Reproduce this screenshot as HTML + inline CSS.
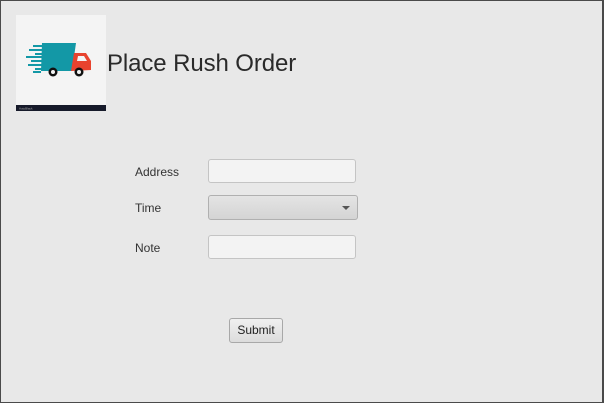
<!DOCTYPE html>
<html><head><meta charset="utf-8"><style>
html,body{margin:0;padding:0;}
body{width:604px;height:403px;position:relative;overflow:hidden;background:#e8e8e8;font-family:"Liberation Sans",sans-serif;}
.frame{position:absolute;left:0;top:0;width:601px;height:401px;border-left:1px solid #4a4a4a;border-top:1px solid #4a4a4a;border-right:2px solid #4a4a4a;border-bottom:1px solid #4a4a4a;}
.logo{position:absolute;left:16px;top:15px;width:90px;height:96px;background:#f4f4f4;}
.title{position:absolute;left:107px;top:50px;font-size:24px;color:#2a2a2a;letter-spacing:-0.1px;}
.lbl{position:absolute;left:135px;font-size:12px;color:#333;}
.inp{position:absolute;left:208px;width:148px;height:24px;border:1px solid #c4c4c4;border-radius:3px;background:#f3f3f3;box-sizing:border-box;}
.combo{position:absolute;left:208px;top:195px;width:150px;height:25px;border:1px solid #b0b0b0;border-radius:3px;background:linear-gradient(#e4e4e4,#d4d4d4);box-sizing:border-box;}
.combo:after{content:"";position:absolute;right:7px;top:10px;border-left:4px solid transparent;border-right:4px solid transparent;border-top:4px solid #555;}
.btn{position:absolute;left:229px;top:318px;width:54px;height:25px;border:1px solid #a8a8a8;border-radius:3px;background:linear-gradient(#f0f0f0,#dcdcdc);box-sizing:border-box;font-size:12px;color:#222;text-align:center;line-height:23px;}
</style></head><body>
<div class="frame"></div>
<div class="logo">
<svg width="90" height="96" viewBox="0 0 90 96">
<rect x="0" y="90" width="90" height="6" fill="#161a2a"/>
<text x="3" y="94.5" font-size="3" fill="#aaa" font-family="Liberation Sans">AutoBlack</text>
<g fill="#1398a6">
<polygon points="26,28 60,28 56,56 25,56"/>
<rect x="17" y="30" width="9" height="2"/><rect x="13" y="34" width="13" height="2"/>
<rect x="19" y="38" width="7" height="2"/><rect x="10" y="41" width="16" height="2"/>
<rect x="15" y="45" width="11" height="2"/><rect x="12" y="49" width="14" height="2"/>
<rect x="19" y="53" width="7" height="2"/><rect x="17" y="56" width="8" height="2"/>
</g>
<polygon points="58,38 70,38 75,46 75,55 55,56" fill="#e8432e"/>
<polygon points="62,41 68,41 71,46 61,46" fill="#f4f4f4"/>
<circle cx="37" cy="57" r="4.5" fill="#111"/><circle cx="37" cy="57" r="2" fill="#f4f4f4"/>
<circle cx="63" cy="57" r="4.5" fill="#111"/><circle cx="63" cy="57" r="2" fill="#f4f4f4"/>
</svg>
</div>
<div class="title">Place Rush Order</div>
<div class="lbl" style="top:165px">Address</div>
<div class="inp" style="top:159px"></div>
<div class="lbl" style="top:201px">Time</div>
<div class="combo"></div>
<div class="lbl" style="top:241px">Note</div>
<div class="inp" style="top:235px"></div>
<div class="btn">Submit</div>
</body></html>
